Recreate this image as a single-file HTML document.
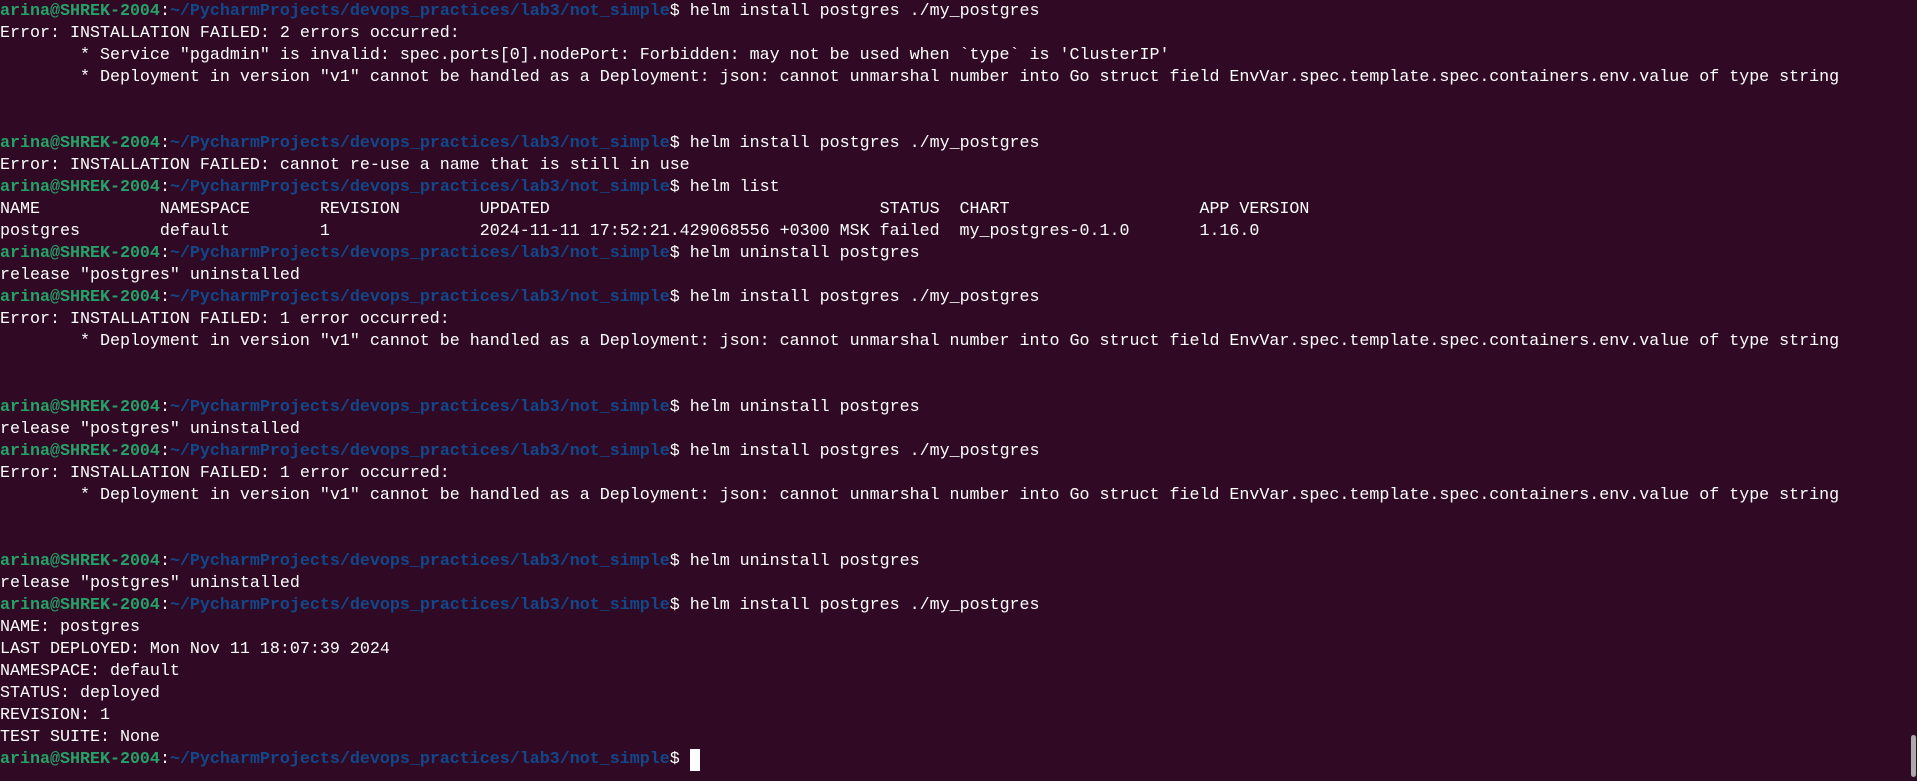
<!DOCTYPE html>
<html><head><meta charset="utf-8"><style>
html,body{margin:0;padding:0;background:#300a24;width:1917px;height:781px;overflow:hidden}
pre{margin:0;padding:1px 0 0 0;font-family:"Liberation Mono",monospace;font-size:16.67px;line-height:22px;color:#ffffff;white-space:pre}
.g{color:#26a269;font-weight:bold}
.b{color:#12488b;font-weight:bold}
.cur{display:inline-block;width:10px;height:22px;background:#fff;vertical-align:top}
.sb{position:absolute;left:1911px;top:735px;width:5px;height:42px;background:#aaa;border-radius:3px}
</style></head><body>
<pre><span class="g">arina@SHREK-2004</span>:<span class="b">~/PycharmProjects/devops_practices/lab3/not_simple</span>$ helm install postgres ./my_postgres
Error: INSTALLATION FAILED: 2 errors occurred:
        * Service "pgadmin" is invalid: spec.ports[0].nodePort: Forbidden: may not be used when `type` is 'ClusterIP'
        * Deployment in version "v1" cannot be handled as a Deployment: json: cannot unmarshal number into Go struct field EnvVar.spec.template.spec.containers.env.value of type string


<span class="g">arina@SHREK-2004</span>:<span class="b">~/PycharmProjects/devops_practices/lab3/not_simple</span>$ helm install postgres ./my_postgres
Error: INSTALLATION FAILED: cannot re-use a name that is still in use
<span class="g">arina@SHREK-2004</span>:<span class="b">~/PycharmProjects/devops_practices/lab3/not_simple</span>$ helm list
NAME            NAMESPACE       REVISION        UPDATED                                 STATUS  CHART                   APP VERSION
postgres        default         1               2024-11-11 17:52:21.429068556 +0300 MSK failed  my_postgres-0.1.0       1.16.0
<span class="g">arina@SHREK-2004</span>:<span class="b">~/PycharmProjects/devops_practices/lab3/not_simple</span>$ helm uninstall postgres
release "postgres" uninstalled
<span class="g">arina@SHREK-2004</span>:<span class="b">~/PycharmProjects/devops_practices/lab3/not_simple</span>$ helm install postgres ./my_postgres
Error: INSTALLATION FAILED: 1 error occurred:
        * Deployment in version "v1" cannot be handled as a Deployment: json: cannot unmarshal number into Go struct field EnvVar.spec.template.spec.containers.env.value of type string


<span class="g">arina@SHREK-2004</span>:<span class="b">~/PycharmProjects/devops_practices/lab3/not_simple</span>$ helm uninstall postgres
release "postgres" uninstalled
<span class="g">arina@SHREK-2004</span>:<span class="b">~/PycharmProjects/devops_practices/lab3/not_simple</span>$ helm install postgres ./my_postgres
Error: INSTALLATION FAILED: 1 error occurred:
        * Deployment in version "v1" cannot be handled as a Deployment: json: cannot unmarshal number into Go struct field EnvVar.spec.template.spec.containers.env.value of type string


<span class="g">arina@SHREK-2004</span>:<span class="b">~/PycharmProjects/devops_practices/lab3/not_simple</span>$ helm uninstall postgres
release "postgres" uninstalled
<span class="g">arina@SHREK-2004</span>:<span class="b">~/PycharmProjects/devops_practices/lab3/not_simple</span>$ helm install postgres ./my_postgres
NAME: postgres
LAST DEPLOYED: Mon Nov 11 18:07:39 2024
NAMESPACE: default
STATUS: deployed
REVISION: 1
TEST SUITE: None
<span class="g">arina@SHREK-2004</span>:<span class="b">~/PycharmProjects/devops_practices/lab3/not_simple</span>$ <span class="cur"></span></pre>
<div class="sb"></div>
</body></html>
